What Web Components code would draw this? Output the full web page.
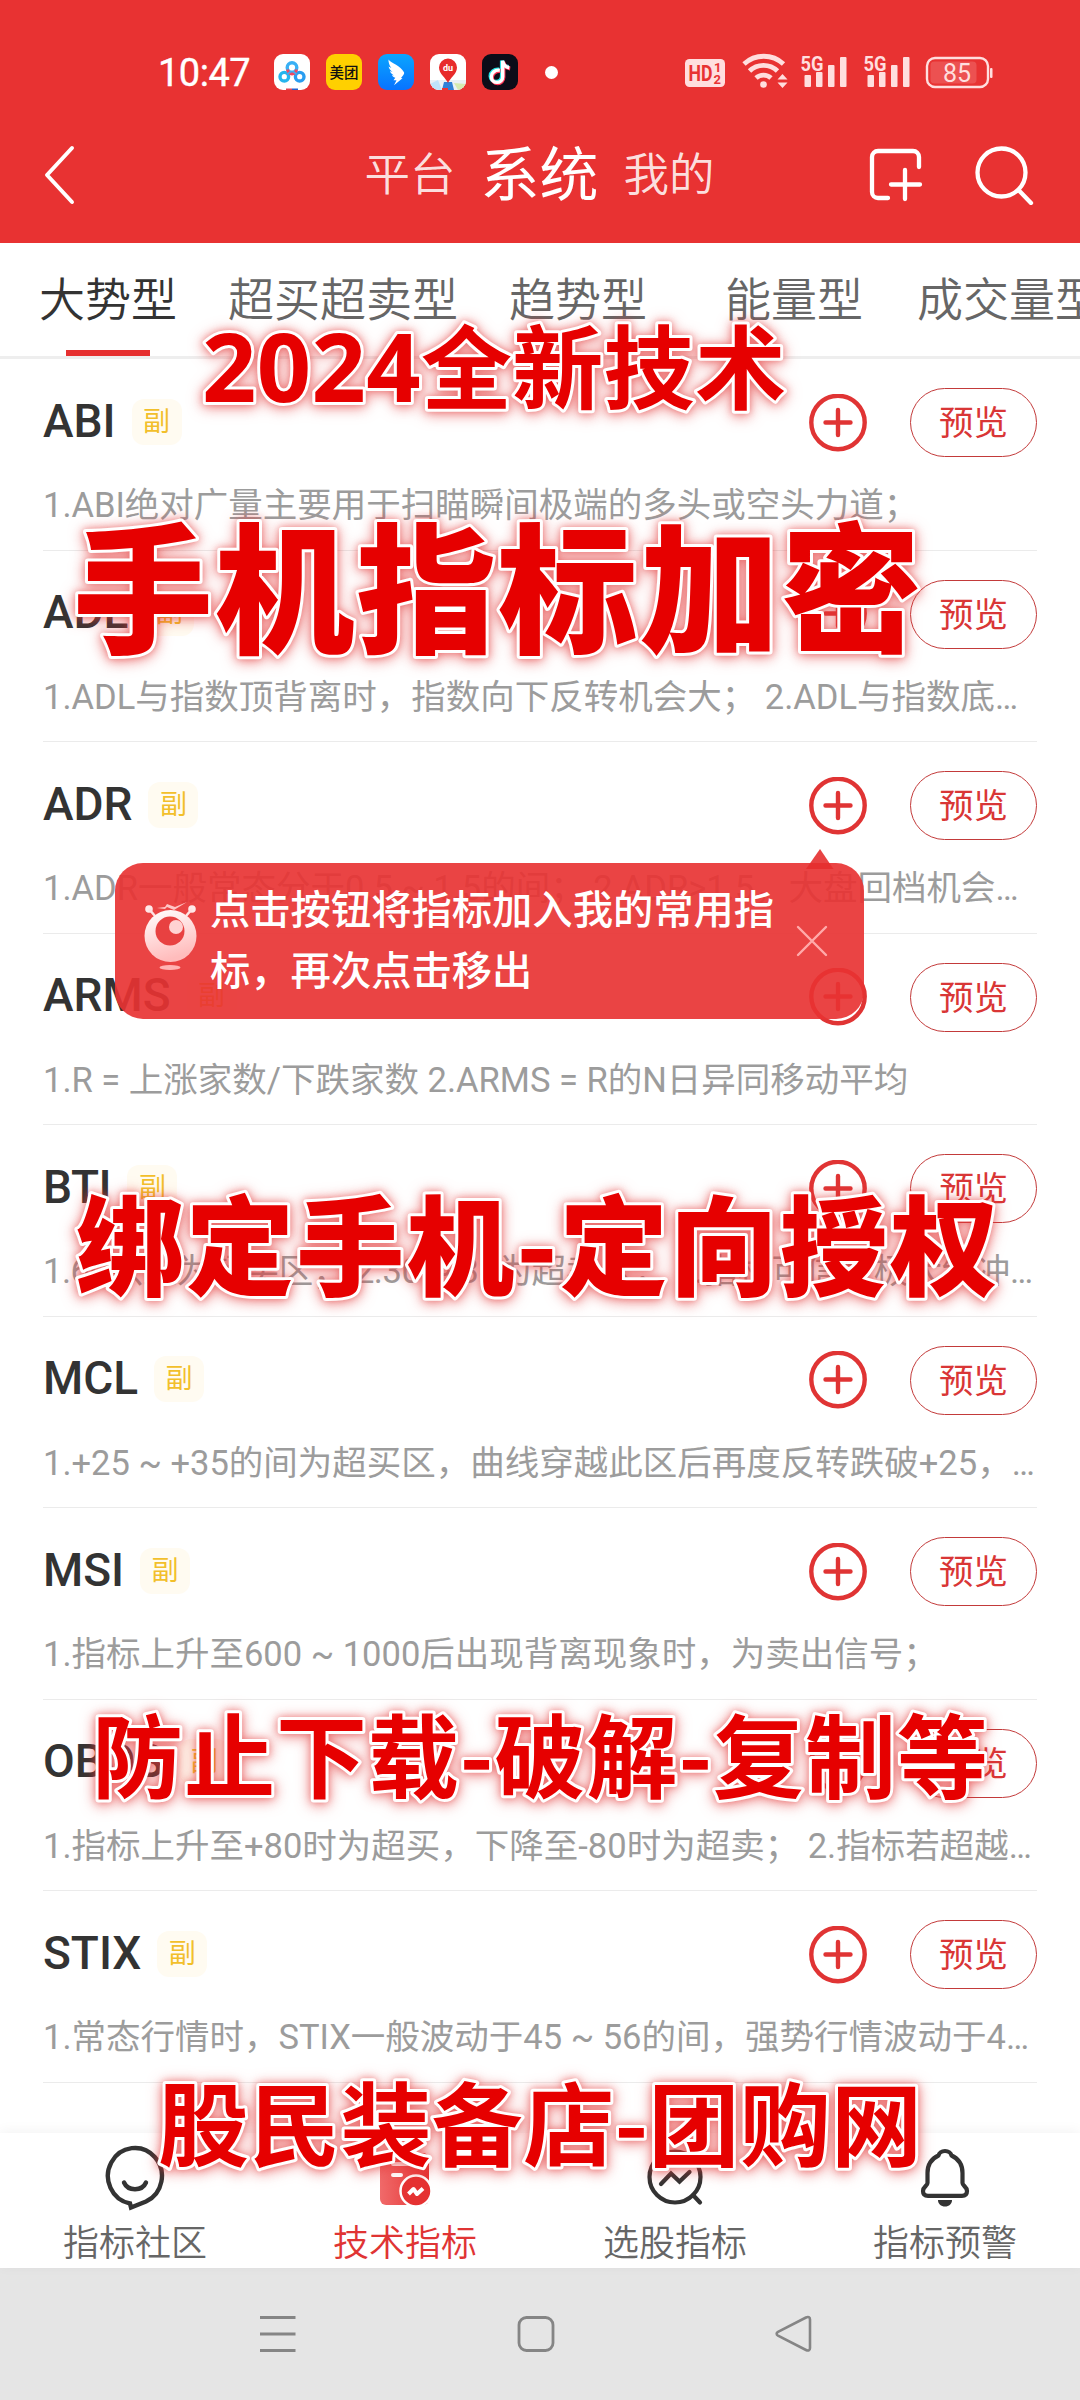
<!DOCTYPE html>
<html lang="zh-CN">
<head>
<meta charset="utf-8">
<title>技术指标</title>
<style>
html,body{margin:0;padding:0}
body{width:1080px;height:2400px;overflow:hidden;background:#fff;font-family:Roboto,"Noto Sans CJK SC",sans-serif}
</style>
</head>
<body>
<phone-screen></phone-screen>
<script>
const define = (name, html, setup) => {
  const t = document.createElement('template');
  t.innerHTML = html;
  customElements.define(name, class extends HTMLElement {
    connectedCallback() {
      if (this.shadowRoot) return;
      const root = this.attachShadow({mode: 'open'});
      root.appendChild(t.content.cloneNode(true));
      if (setup) setup(this, root);
    }
  });
};

define('status-bar', `
<style>
:host{display:flex;height:107px;box-sizing:border-box;padding:37px 86px 0 158px;align-items:center;color:#fff}
.time{font-size:38px;line-height:70px;width:116px;letter-spacing:-.5px;white-space:nowrap;padding-top:2px;-webkit-text-stroke:.4px #fff}
.apps{display:flex;gap:16px;align-items:center}
svg{display:block;flex:none}
.dot{width:13px;height:13px;border-radius:50%;background:#fff;margin-left:27px}
.right{display:flex;align-items:center;margin-left:auto;color:#ffdede}
</style>
<span class="time">10:47</span>
<div class="apps">
<svg width="36" height="36" viewBox="0 0 36 36"><rect width="36" height="36" rx="9" fill="#fff"/><g fill="none" stroke-width="3.400"><circle cx="10.300" cy="22.700" r="4.300" stroke="#25b5ee"/><circle cx="25.700" cy="22.700" r="4.300" stroke="#2a9df0"/><circle cx="18" cy="13.500" r="4.800" stroke="#39b0f5"/><path d="M13.500 15.500q1 4.500 4.500 4.500t4.500-4.500" stroke="#f04860" stroke-width="3"/><path d="M13.500 20L17 17.500M22.500 20L19 17.500" stroke="#4aa8ee" stroke-width="2"/></g><path d="M12 34.500h6V36h-6z" fill="#e64350"/><path d="M18 34.500h6V36h-6z" fill="#2563d0"/></svg>
<svg width="36" height="36" viewBox="0 0 36 36"><rect width="36" height="36" rx="9" fill="#ffd000"/><text x="18" y="23.500" font-size="14.500" font-weight="500" text-anchor="middle" fill="#111">美团</text></svg>
<svg width="36" height="36" viewBox="0 0 36 36"><defs><linearGradient id="d" x2="0" y2="1"><stop stop-color="#0aa5ff"/><stop offset="1" stop-color="#0873ff"/></linearGradient></defs><rect width="36" height="36" rx="9" fill="url(#d)"/><path d="M10.500 5.500c3 4 12 6 15.500 12.800.5 1.200-.3 2.200-1 3.200l-2 2.500 1.500.3-8.500 7 2.500-5h-3l1.800-2.500c-2-.5-3-1.600-3.400-2.700l2 .3c-2.400-1.200-3.500-2.800-3.900-4.300l2.500.8c-2.500-1.800-3.600-3.800-3.900-5.500l2.700 1.500c-2-2.500-3-5.700-2.800-8.400z" fill="#fff"/></svg>
<svg width="36" height="36" viewBox="0 0 36 36"><defs><clipPath id="m"><rect width="36" height="36" rx="9"/></clipPath></defs><g clip-path="url(#m)"><rect width="36" height="36" fill="#fff"/><path d="M0 26h36v10H0z" fill="#eaf0f5"/><path d="M0 30l8-4 4 10H0z" fill="#bfe3fa"/><path d="M36 30l-12-1 4 7h8z" fill="#d5eab0"/><path d="M14 28h8l2 8H12z" fill="#2f80d8"/><path d="M12 34h6v2h-6z" fill="#e33"/><path d="M18 29c-2-5-9-9-9-15.500a9 9 0 0 1 18 0C27 20 20 24 18 29z" fill="#e82b2b"/></g><text x="18" y="17" font-size="9" font-weight="700" text-anchor="middle" fill="#fff">du</text></svg>
<svg width="36" height="36" viewBox="0 0 36 36"><rect width="36" height="36" rx="9" fill="#0c0c18"/><g fill="none" stroke-width="4"><path d="M17 15.500c-5-.6-8.500 3-8.500 6.500a5.700 5.700 0 0 0 11.400 0V6.500c.7 4 3 6 6.800 6.500" stroke="#25e3e5"/><path d="M18.500 17c-5-.6-8.500 3-8.500 6.500a5.700 5.700 0 0 0 11.400 0V8c.7 4 3 6 6.800 6.500" stroke="#ff3556"/><path d="M17.800 16.200c-5-.6-8.500 3-8.500 6.500a5.700 5.700 0 0 0 11.400 0V6.800c.7 4 3 6.500 6.600 7" stroke="#fff" stroke-width="3.400"/></g></svg>
</div>
<i class="dot"></i>
<div class="right">
<svg width="310" height="40" viewBox="0 0 310 40" fill="#ffdede">
<rect x="1" y="7" width="40" height="28" rx="4.500"/>
<g fill="#e83232" font-weight="700"><text x="4.500" y="29" font-size="22" textLength="24" lengthAdjust="spacingAndGlyphs">HD</text><text x="30" y="20" font-size="13">1</text><text x="29.500" y="32" font-size="13">2</text></g>
<g fill="none" stroke="#ffdede" stroke-width="4.800"><path d="M60 12a29 29 0 0 1 39.500 0"/><path d="M65.500 19a20 20 0 0 1 28 0"/><path d="M72 26a11 11 0 0 1 15 0"/></g>
<circle cx="79.500" cy="32.500" r="3.300"/><path d="M98.500 22l5 5.500h-10zM93.500 30.500h10l-5 5.500z"/>
<g><text x="116.500" y="18.500" font-size="21" font-weight="700" textLength="23" lengthAdjust="spacingAndGlyphs">5G</text><rect x="120.500" y="23" width="6.500" height="12" rx="1"/><rect x="132" y="20" width="6.500" height="15" rx="1"/><rect x="144" y="13" width="6.500" height="22" rx="1"/><rect x="156" y="5" width="6.500" height="30" rx="1"/></g>
<g transform="translate(63)"><text x="116.500" y="18.500" font-size="21" font-weight="700" textLength="23" lengthAdjust="spacingAndGlyphs">5G</text><rect x="120.500" y="23" width="6.500" height="12" rx="1"/><rect x="132" y="20" width="6.500" height="15" rx="1"/><rect x="144" y="13" width="6.500" height="22" rx="1"/><rect x="156" y="5" width="6.500" height="30" rx="1"/></g>
<rect x="243" y="6" width="61" height="29" rx="8" fill="none" stroke="#ffdede" stroke-width="2.400"/><rect x="246.500" y="9.500" width="46" height="22" rx="4" fill="#ffdede" opacity=".18"/><rect x="306" y="16" width="2.500" height="10" rx="1"/>
<text x="273" y="29.500" font-size="25" text-anchor="middle">85</text>
</svg>
</div>`);

define('app-header', `
<style>
:host{display:flex;height:136px;box-sizing:border-box;align-items:center;padding:0 46px 0 42px;color:#fff;justify-content:space-between}
svg{display:block;flex:none}
.mid{display:flex;align-items:center;gap:25px;font-size:45.500px;line-height:64px;color:rgba(255,255,255,.87);font-weight:350;margin-left:132px;padding-top:2px}
.mid b{font-weight:400;font-size:59px;color:#fff}
.acts{display:flex;gap:51px}
</style>
<svg width="36" height="64" viewBox="0 0 36 64"><path d="M30 5L5 32l25 27" fill="none" stroke="#fff" stroke-width="4" stroke-linecap="round" stroke-linejoin="round"/></svg>
<div class="mid"><span>平台</span><b>系统</b><span>我的</span></div>
<div class="acts">
<svg width="54" height="60" viewBox="0 0 54 60" fill="none" stroke="#fff" stroke-width="4.300" stroke-linecap="round"><path d="M50 22V12a6 6 0 0 0-6-6H9a6 6 0 0 0-6 6v35a6 6 0 0 0 6 6h10"/><path d="M36 25v29M22 39.500h29"/></svg>
<svg width="60" height="60" viewBox="0 0 60 60" fill="none" stroke="#fff" stroke-width="4.300" stroke-linecap="round"><circle cx="27.500" cy="27.500" r="24"/><path d="M44.500 45L57 58"/></svg>
</div>`);

define('tab-item', `
<style>
:host{display:flex;flex-direction:column;flex:none;align-items:center;font-size:46px;line-height:60px;padding-top:27px;color:#666;font-weight:350;height:113px;box-sizing:border-box;justify-content:space-between;white-space:nowrap}
:host([active]){color:#333}
i{width:84px;height:6px;background:transparent}
:host([active]) i{background:#e62f2f}
</style><slot></slot><i></i>`);

define('tab-strip', `
<style>
:host{display:flex;height:116px;box-sizing:border-box;border-bottom:3px solid #eee;padding-left:39px;gap:51px;overflow:hidden;background:#fff}
.w{margin:0 3px 0 27px}
</style>
<tab-item active>大势型</tab-item><tab-item>超买超卖型</tab-item><tab-item>趋势型</tab-item><tab-item class="w">能量型</tab-item><tab-item>成交量型</tab-item>`);

define('indicator-row', `
<style>
:host{display:flex;flex-direction:column;margin:0 43px;height:191.500px;box-sizing:border-box;border-bottom:1.500px solid #ebebeb}
.top{display:flex;align-items:center;height:127px}
.name{font-size:46px;line-height:54px;font-weight:500;color:#333;padding-bottom:4px}
.tag{margin-left:16px;width:50px;height:46px;border-radius:12px;background:#fffbf1;color:#f2bf2b;font-size:27px;line-height:47px;text-align:center;margin-bottom:2px}
svg{margin-left:auto;margin-right:43px;display:block}
.btn{width:127px;height:69px;box-sizing:border-box;border:1.500px solid #c33a3a;border-radius:35px;color:#d93636;font-size:34.500px;line-height:69px;text-align:center}
.desc{font-size:34.500px;line-height:42px;color:#9c9c9c;white-space:nowrap;margin-top:-2px}
</style>
<div class="top"><span class="name"></span><span class="tag">副</span>
<svg width="58" height="58" viewBox="0 0 58 58" fill="none" stroke="#e03434" stroke-width="4.400"><circle cx="29" cy="28.500" r="26.700"/><path d="M29 16v25M16.500 28.500h25" stroke-linecap="round"/></svg>
<span class="btn">预览</span></div>
<div class="desc"><slot></slot></div>`, (el, r) => { r.querySelector('.name').textContent = el.getAttribute('name'); });

define('tip-bubble', `
<style>
:host{position:absolute;left:115px;top:863px;width:749px;height:156px;box-sizing:border-box;border-radius:28px;background:rgba(232,50,50,.915);display:flex;padding:17px 0 0 29px;color:#fff}
.face{margin-top:20px;flex:none}
p{margin:0 0 0 12px;font-size:40.300px;line-height:61px;font-weight:500;width:578px}
.x{margin:45px 0 0 8px;flex:none}
.arrow{position:absolute;left:691px;top:-14px}
</style>
<svg class="arrow" width="28" height="20"><path d="M14 0L27.500 20H0z" fill="#e62f2f" opacity=".9"/></svg>
<svg class="face" width="54" height="72" viewBox="0 0 54 72"><defs><linearGradient id="g" x2="0.300" y2="1"><stop stop-color="#fff"/><stop offset="1" stop-color="#ffbcbc"/></linearGradient></defs>
<g fill="#ffe9e9"><circle cx="5" cy="9" r="3.800"/><circle cx="48" cy="9" r="3.800"/></g><path d="M5 9l6 7M48 9l-6 7" stroke="#ffe2e2" stroke-width="2.500"/>
<path d="M13 8l8-1 2-3 8 3 12-5-13 8-7-3-2 2z" fill="#ffc6c6"/>
<circle cx="26.500" cy="36" r="26" fill="url(#g)"/><circle cx="26" cy="31" r="14.500" fill="#e84141"/><circle cx="32" cy="27" r="7" fill="#ffd2d2"/><ellipse cx="26" cy="67.500" rx="10.500" ry="2.500" fill="#ffb3b3"/></svg>
<p>点击按钮将指标加入我的常用指标，再次点击移出</p>
<svg class="x" width="32" height="32" viewBox="0 0 32 32"><path d="M2 2l28 28M30 2L2 30" stroke="#ffaaaa" stroke-width="2.400" stroke-linecap="round"/></svg>`);

define('nav-item', `
<style>
:host{display:flex;flex:1;flex-direction:column;align-items:center;padding-top:8px;box-sizing:border-box;color:#666;font-size:36px;line-height:48px;font-weight:350}
:host([active]){color:#e03434}
span{margin-top:3px}
</style><slot name="icon"></slot><span><slot></slot></span>`);

define('bottom-nav', `
<style>
:host{display:flex;height:135px;background:#fff;box-shadow:0 -2px 12px rgba(0,0,0,.05);position:relative}
svg{display:block}
</style>
<nav-item><svg slot="icon" width="60" height="76" viewBox="0 0 60 76"><path d="M25 62.500A27 28 0 1 1 41 60.500L26 66.500z" fill="none" stroke="#333" stroke-width="4.400"/><path d="M19 41.500c4 9 18 9 22 0" fill="none" stroke="#333" stroke-width="4.400" stroke-linecap="round"/></svg>指标社区</nav-item>
<nav-item active><svg slot="icon" width="60" height="76" viewBox="0 0 60 76"><defs><linearGradient id="r" x2="1"><stop stop-color="#f06a6a"/><stop offset="1" stop-color="#e53232"/></linearGradient></defs><rect x="5" y="12" width="49" height="52" rx="6" fill="url(#r)"/><path d="M18 23h22M18 34h8" stroke="#fff" stroke-width="4" stroke-linecap="round"/><circle cx="41" cy="50" r="15.500" fill="#e53232" stroke="#fff" stroke-width="2.500"/><path d="M33.500 53l5-5 3.500 5 6-5.500" fill="none" stroke="#fff" stroke-width="4" stroke-linejoin="round"/></svg>技术指标</nav-item>
<nav-item><svg slot="icon" width="60" height="76" viewBox="0 0 60 76" fill="none" stroke="#333" stroke-width="4.200" stroke-linecap="round"><circle cx="30" cy="36" r="25.500"/><path d="M16 43l10-10.500 8.500 8L44.500 31M48 54l7 7.500"/></svg>选股指标</nav-item>
<nav-item><svg slot="icon" width="60" height="76" viewBox="0 0 60 76"><path d="M30 10c-3.500 0-6 2.200-6.500 4.500C16 18 12.500 24 12.500 32v10c0 3-4.500 3.500-4.500 8 0 3 1.500 4.800 5 4.800h34c3.500 0 5-1.800 5-4.800 0-4.500-4.500-5-4.500-8V32c0-8-3.500-14-11-17.500-.5-2.300-3-4.500-6.500-4.500z" fill="none" stroke="#333" stroke-width="4.200" stroke-linejoin="round"/><path d="M23 59h14c0 4-3 6.500-7 6.500s-7-2.500-7-6.500z" fill="#333"/></svg>指标预警</nav-item>`);

define('system-nav', `
<style>:host{display:flex;height:132px;background:#e5e5e5;align-items:center;padding:0 267px 0 258px;justify-content:space-between}svg{display:block}</style>
<svg width="40" height="40" viewBox="0 0 40 40"><path d="M2 3.500h35.500M2 20h35.500M2 36.500h35.500" stroke="#858585" stroke-width="3"/></svg>
<svg width="40" height="40" viewBox="0 0 40 40"><rect x="3" y="3.500" width="34" height="33" rx="7.500" fill="none" stroke="#858585" stroke-width="2.800"/></svg>
<svg width="40" height="40" viewBox="0 0 40 40"><path d="M33 3.500L5 17.800c-1.800 1-1.800 2.900 0 3.900L33 36c2.300 1.200 4 .3 4-2V5.500c0-2.300-1.700-3.200-4-2z" fill="none" stroke="#858585" stroke-width="2.600"/></svg>`);

define('promo-text', `
<style>
:host{position:absolute;left:0;width:1080px}
svg{display:block;overflow:visible;filter:drop-shadow(0 0 3px rgba(226,60,60,.4)) drop-shadow(0 2px 7px rgba(226,50,50,.6))}
text{font-family:"Noto Sans CJK SC",sans-serif;font-weight:700;fill:#e60000;stroke:#fff;stroke-width:6px;stroke-linejoin:round;paint-order:stroke}
:host([heavy]) text{font-weight:900}
.num{font-family:"Open Sans","Noto Sans",sans-serif;font-size:1.045em}
</style><svg width="1080" height="10"><text></text></svg>`, (el, r) => {
  const t = r.querySelector('text'), num = el.getAttribute('num');
  if (num) {
    const s = document.createElementNS('http://www.w3.org/2000/svg', 'tspan');
    s.setAttribute('class', 'num');
    s.textContent = num;
    t.append(s);
  }
  t.append(el.getAttribute('text'));
  t.setAttribute('x', el.getAttribute('x'));
  t.setAttribute('y', 0);
  t.setAttribute('font-size', el.getAttribute('size'));
  t.setAttribute('textLength', el.getAttribute('span'));
  el.style.top = el.getAttribute('base') + 'px';
});

define('phone-screen', `
<style>
:host{display:flex;flex-direction:column;position:relative;width:1080px;height:2400px;overflow:hidden;background:#fff}
header{background:#e83232}
main{flex:1;min-height:0;overflow:hidden;background:#fff;display:flex;flex-direction:column}
main>*{flex:none}
</style>
<header><status-bar></status-bar><app-header></app-header></header>
<tab-strip></tab-strip>
<main>
<indicator-row name="ABI">1.ABI绝对广量主要用于扫瞄瞬间极端的多头或空头力道；</indicator-row>
<indicator-row name="ADL">1.ADL与指数顶背离时，指数向下反转机会大； 2.ADL与指数底…</indicator-row>
<indicator-row name="ADR">1.ADR一般常态分于0.5 ~ 1.5的间； 2.ADR&gt;1.5，大盘回档机会…</indicator-row>
<indicator-row name="ARMS">1.R = 上涨家数/下跌家数 2.ARMS = R的N日异同移动平均</indicator-row>
<indicator-row name="BTI" style="letter-spacing:-.45px">1.60以上为超买区； 2.30 ~ 35为超卖区； 3.指标可信度极大缓冲…</indicator-row>
<indicator-row name="MCL">1.+25 ~ +35的间为超买区，曲线穿越此区后再度反转跌破+25，…</indicator-row>
<indicator-row name="MSI">1.指标上升至600 ~ 1000后出现背离现象时，为卖出信号；</indicator-row>
<indicator-row name="OBOS">1.指标上升至+80时为超买，下降至-80时为超卖； 2.指标若超越…</indicator-row>
<indicator-row name="STIX">1.常态行情时，STIX一般波动于45 ~ 56的间，强势行情波动于4…</indicator-row>
</main>
<bottom-nav></bottom-nav>
<system-nav></system-nav>
<tip-bubble></tip-bubble>
<promo-text num="2024" text="全新技术" x="202" span="584" size="91" base="402"></promo-text>
<promo-text heavy text="手机指标加密" x="73" span="848" size="140" base="642"></promo-text>
<promo-text heavy text="绑定手机-定向授权" x="76" span="922" size="108" base="1287"></promo-text>
<promo-text text="防止下载-破解-复制等" x="92" span="896" size="91" base="1791"></promo-text>
<promo-text text="股民装备店-团购网" x="158" span="764" size="91" base="2159"></promo-text>`);
</script>
</body>
</html>
